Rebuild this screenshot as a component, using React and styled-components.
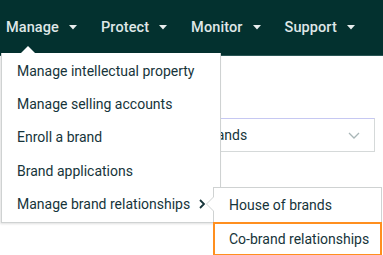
import styled, { createGlobalStyle } from "styled-components";

const Global = createGlobalStyle`
  html, body {
    margin: 0;
    padding: 0;
    background: #ffffff;
    font-family: Roboto, "Liberation Sans", sans-serif;
  }
`;

const Page = styled.div`
  position: relative;
  width: 383px;
  height: 255px;
  overflow: hidden;
  background: #ffffff;
`;

const NavBar = styled.nav`
  display: flex;
  align-items: center;
  gap: 24px;
  height: 56px;
  padding: 0 0 0 6px;
  background: #03312f;
  border-bottom: 1px solid #2a5655;
  box-sizing: border-box;
`;

const NavItem = styled.div`
  display: flex;
  align-items: center;
  gap: 10px;
  color: #dfe7e7;
  font-size: 14.5px;
  font-weight: 500;
  letter-spacing: 0.1px;
`;

const Caret = () => (
  <svg width="8" height="5" viewBox="0 0 8 5">
    <path d="M0 0 H8 L4 4.5 Z" fill="#e8eeee" />
  </svg>
);

const Content = styled.div`
  padding: 62px 8px 0 160px;
`;

const Select = styled.div`
  display: flex;
  align-items: center;
  justify-content: space-between;
  height: 34px;
  padding: 0 14px 0 24px;
  border: 1px solid #d5d9d9;
  border-top-color: #c6c8f2;
  box-sizing: border-box;
  color: #16343a;
  font-size: 14px;
`;

const Menu = styled.div`
  position: absolute;
  left: 1px;
  top: 53px;
  width: 220px;
  height: 170px;
  box-sizing: border-box;
  background: #ffffff;
  border: 1px solid #cfd2d2;
  border-top: none;
  box-shadow: -1px 1px 2px rgba(0, 0, 0, 0.12);
  display: flex;
  flex-direction: column;
  padding-top: 1px;

  &::before {
    content: "";
    position: absolute;
    left: 19px;
    top: -7px;
    border-left: 7px solid transparent;
    border-right: 7px solid transparent;
    border-bottom: 7px solid #ffffff;
  }
`;

const MenuItem = styled.div`
  display: flex;
  align-items: center;
  gap: 8px;
  height: 33.4px;
  padding-left: 15px;
  color: #16343a;
  font-size: 14px;
`;

const SubMenu = styled.div`
  position: absolute;
  left: 213px;
  top: 187px;
  width: 169px;
  height: 70px;
  box-sizing: border-box;
  background: #ffffff;
  border: 1px solid #cfd2d2;
  display: flex;
  flex-direction: column;

  &::before {
    content: "";
    position: absolute;
    left: -8px;
    top: 8px;
    border-top: 8px solid transparent;
    border-bottom: 8px solid transparent;
    border-right: 8px solid #cfd2d2;
  }
  &::after {
    content: "";
    position: absolute;
    left: -7px;
    top: 8px;
    border-top: 8px solid transparent;
    border-bottom: 8px solid transparent;
    border-right: 8px solid #ffffff;
  }
`;

const SubItem = styled.div`
  display: flex;
  align-items: center;
  height: ${(p) => (p.$active ? "31px" : "35px")};
  padding-left: ${(p) => (p.$active ? "14px" : "15px")};
  margin: ${(p) => (p.$active ? "0 -1px 0 -1px" : "0")};
  border: ${(p) => (p.$active ? "2px solid #ff8f1f" : "none")};
  color: #16343a;
  font-size: 14px;
`;

const Chevron = () => (
  <svg width="8" height="10" viewBox="0 0 8 10">
    <path d="M2 1 L6 5 L2 9" fill="none" stroke="#16343a" strokeWidth="1.8" />
  </svg>
);

const SelectChevron = () => (
  <svg width="12" height="7" viewBox="0 0 12 7">
    <path d="M1 1 L6 6 L11 1" fill="none" stroke="#a9b6b7" strokeWidth="1.3" />
  </svg>
);

export default function App() {
  return (
    <Page>
      <Global />
      <NavBar>
        {["Manage", "Protect", "Monitor", "Support"].map((label) => (
          <NavItem key={label}>
            <span>{label}</span>
            <Caret />
          </NavItem>
        ))}
      </NavBar>
      <Content>
        <Select>
          <span>All brands</span>
          <SelectChevron />
        </Select>
      </Content>
      <Menu>
        <MenuItem>Manage intellectual property</MenuItem>
        <MenuItem>Manage selling accounts</MenuItem>
        <MenuItem>Enroll a brand</MenuItem>
        <MenuItem>Brand applications</MenuItem>
        <MenuItem>
          <span>Manage brand relationships</span>
          <Chevron />
        </MenuItem>
      </Menu>
      <SubMenu>
        <SubItem>House of brands</SubItem>
        <SubItem $active>Co-brand relationships</SubItem>
      </SubMenu>
    </Page>
  );
}
